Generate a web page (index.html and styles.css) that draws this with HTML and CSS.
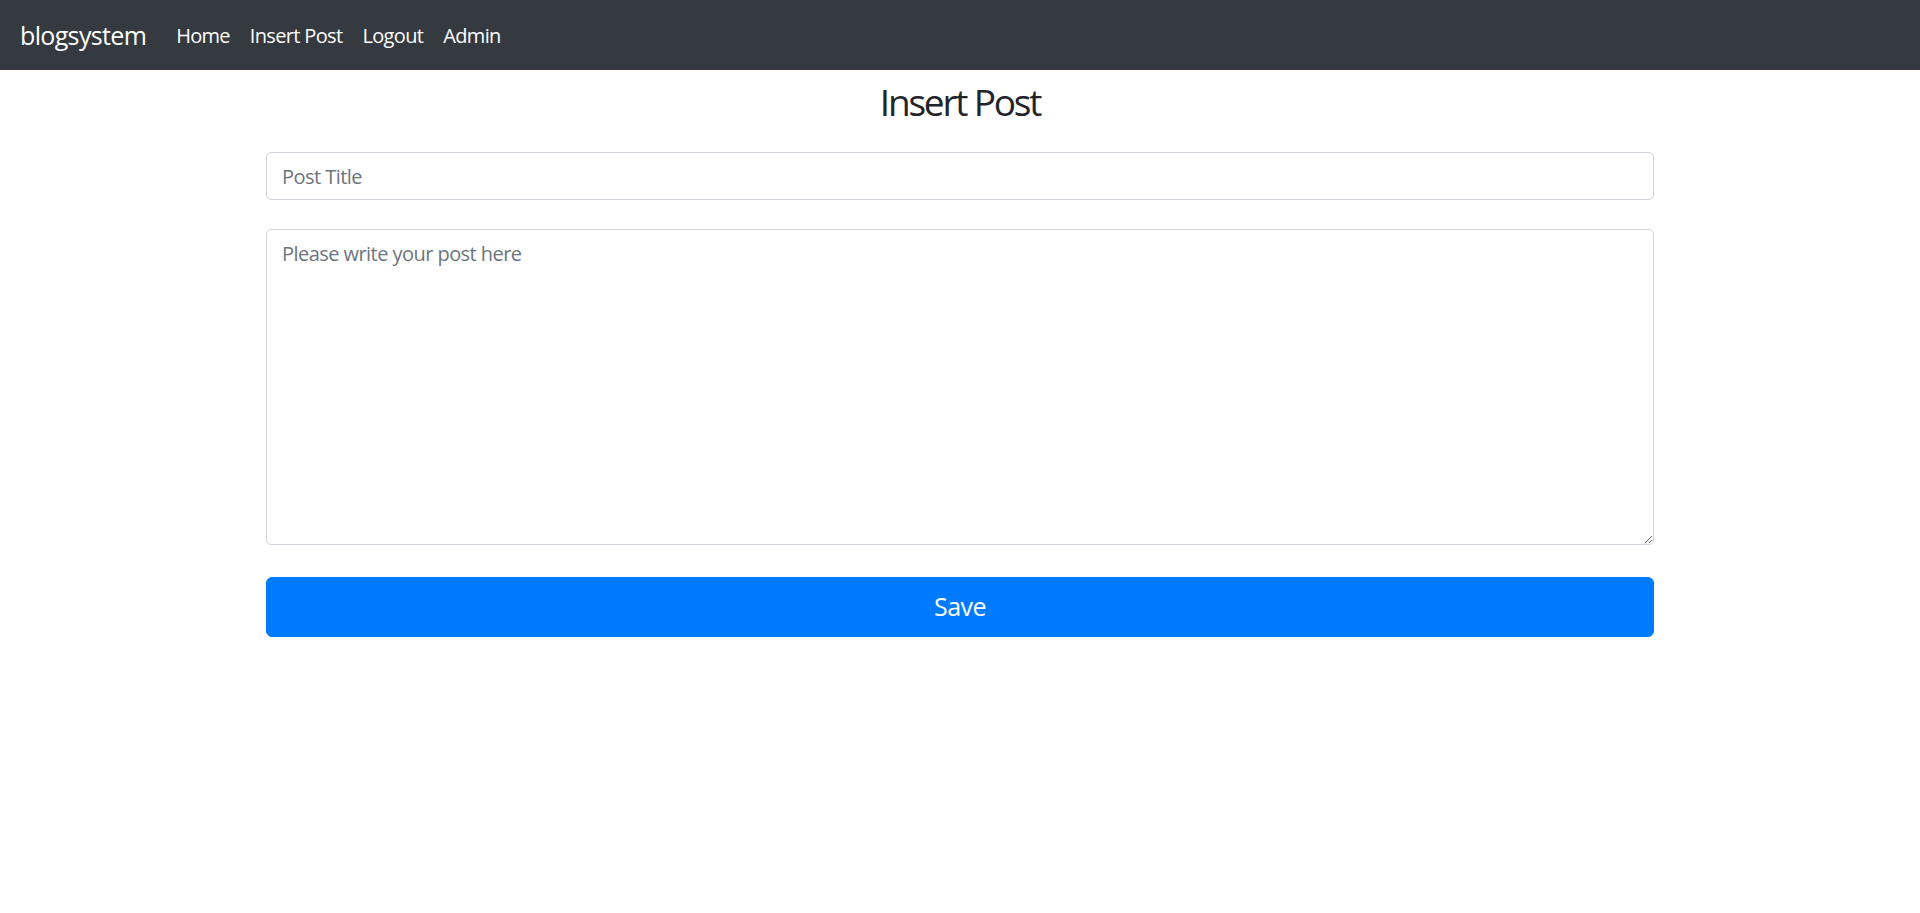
FILE: index.html
```html
<!DOCTYPE html>
<html lang="en">
<head>
<meta charset="utf-8">
<title>Insert Post</title>
<link rel="stylesheet" href="styles.css">
</head>
<body>
<nav class="navbar">
  <a class="brand" href="#">blogsystem</a>
  <ul class="nav">
    <li><a class="nav-link" href="#">Home</a></li>
    <li><a class="nav-link" href="#">Insert Post</a></li>
    <li><a class="nav-link" href="#">Logout</a></li>
    <li><a class="nav-link" href="#">Admin</a></li>
  </ul>
</nav>
<main class="container">
  <h2 class="page-title">Insert Post</h2>
  <form class="post-form">
    <input class="form-control title-input" type="text" placeholder="Post Title">
    <textarea class="form-control body-input" placeholder="Please write your post here"></textarea>
    <button class="btn-save" type="button">Save</button>
  </form>
</main>
</body>
</html>
```
FILE: styles.css
```css
* { box-sizing: border-box; }
html, body { margin: 0; padding: 0; }
body {
  font-family: "Open Sans", "Noto Sans", sans-serif;
  font-size: 20px;
  line-height: 1.5;
  color: #212529;
  background: #fff;
}
.navbar {
  display: flex;
  align-items: center;
  height: 70px;
  padding: 2px 20px 0;
  background: #343a40;
}
.brand {
  color: #fff;
  font-size: 25px;
  line-height: 37.5px;
  text-decoration: none;
  margin-right: 20px;
  letter-spacing: -0.65px;
}
.nav {
  display: flex;
  list-style: none;
  margin: 0;
  padding: 0;
}
.nav-link {
  display: block;
  color: #fff;
  text-decoration: none;
  padding: 0 10px;
  font-size: 20px;
  line-height: 30px;
  letter-spacing: -0.65px;
}
.nav li:first-child .nav-link { letter-spacing: -0.75px; }
.container {
  width: 1388px;
  margin: 0 auto;
}
.page-title {
  margin: 9px 0 0;
  text-align: center;
  font-size: 37px;
  font-weight: 400;
  line-height: 46px;
  letter-spacing: -2.2px;
}
.post-form {
  display: flex;
  flex-direction: column;
  margin-top: 27px;
}
.form-control {
  display: block;
  width: 100%;
  font-family: inherit;
  font-size: 20px;
  line-height: 30px;
  color: #495057;
  background: #fff;
  border: 1px solid #ced4da;
  border-radius: 5px;
  padding: 8.5px 15px 6.5px;
  margin: 0;
  letter-spacing: -0.55px;
}
.form-control::placeholder { color: #6c757d; opacity: 1; }
.title-input { height: 47.5px; }
.body-input {
  height: 316px;
  margin-top: 29.5px;
  resize: vertical;
}
.btn-save {
  margin-top: 32px;
  height: 60px;
  width: 100%;
  border: 1px solid #007bff;
  border-radius: 6px;
  background: #007bff;
  color: #fff;
  font-family: inherit;
  font-size: 25px;
  line-height: 37.5px;
  letter-spacing: -0.5px;
  cursor: pointer;
}
```
